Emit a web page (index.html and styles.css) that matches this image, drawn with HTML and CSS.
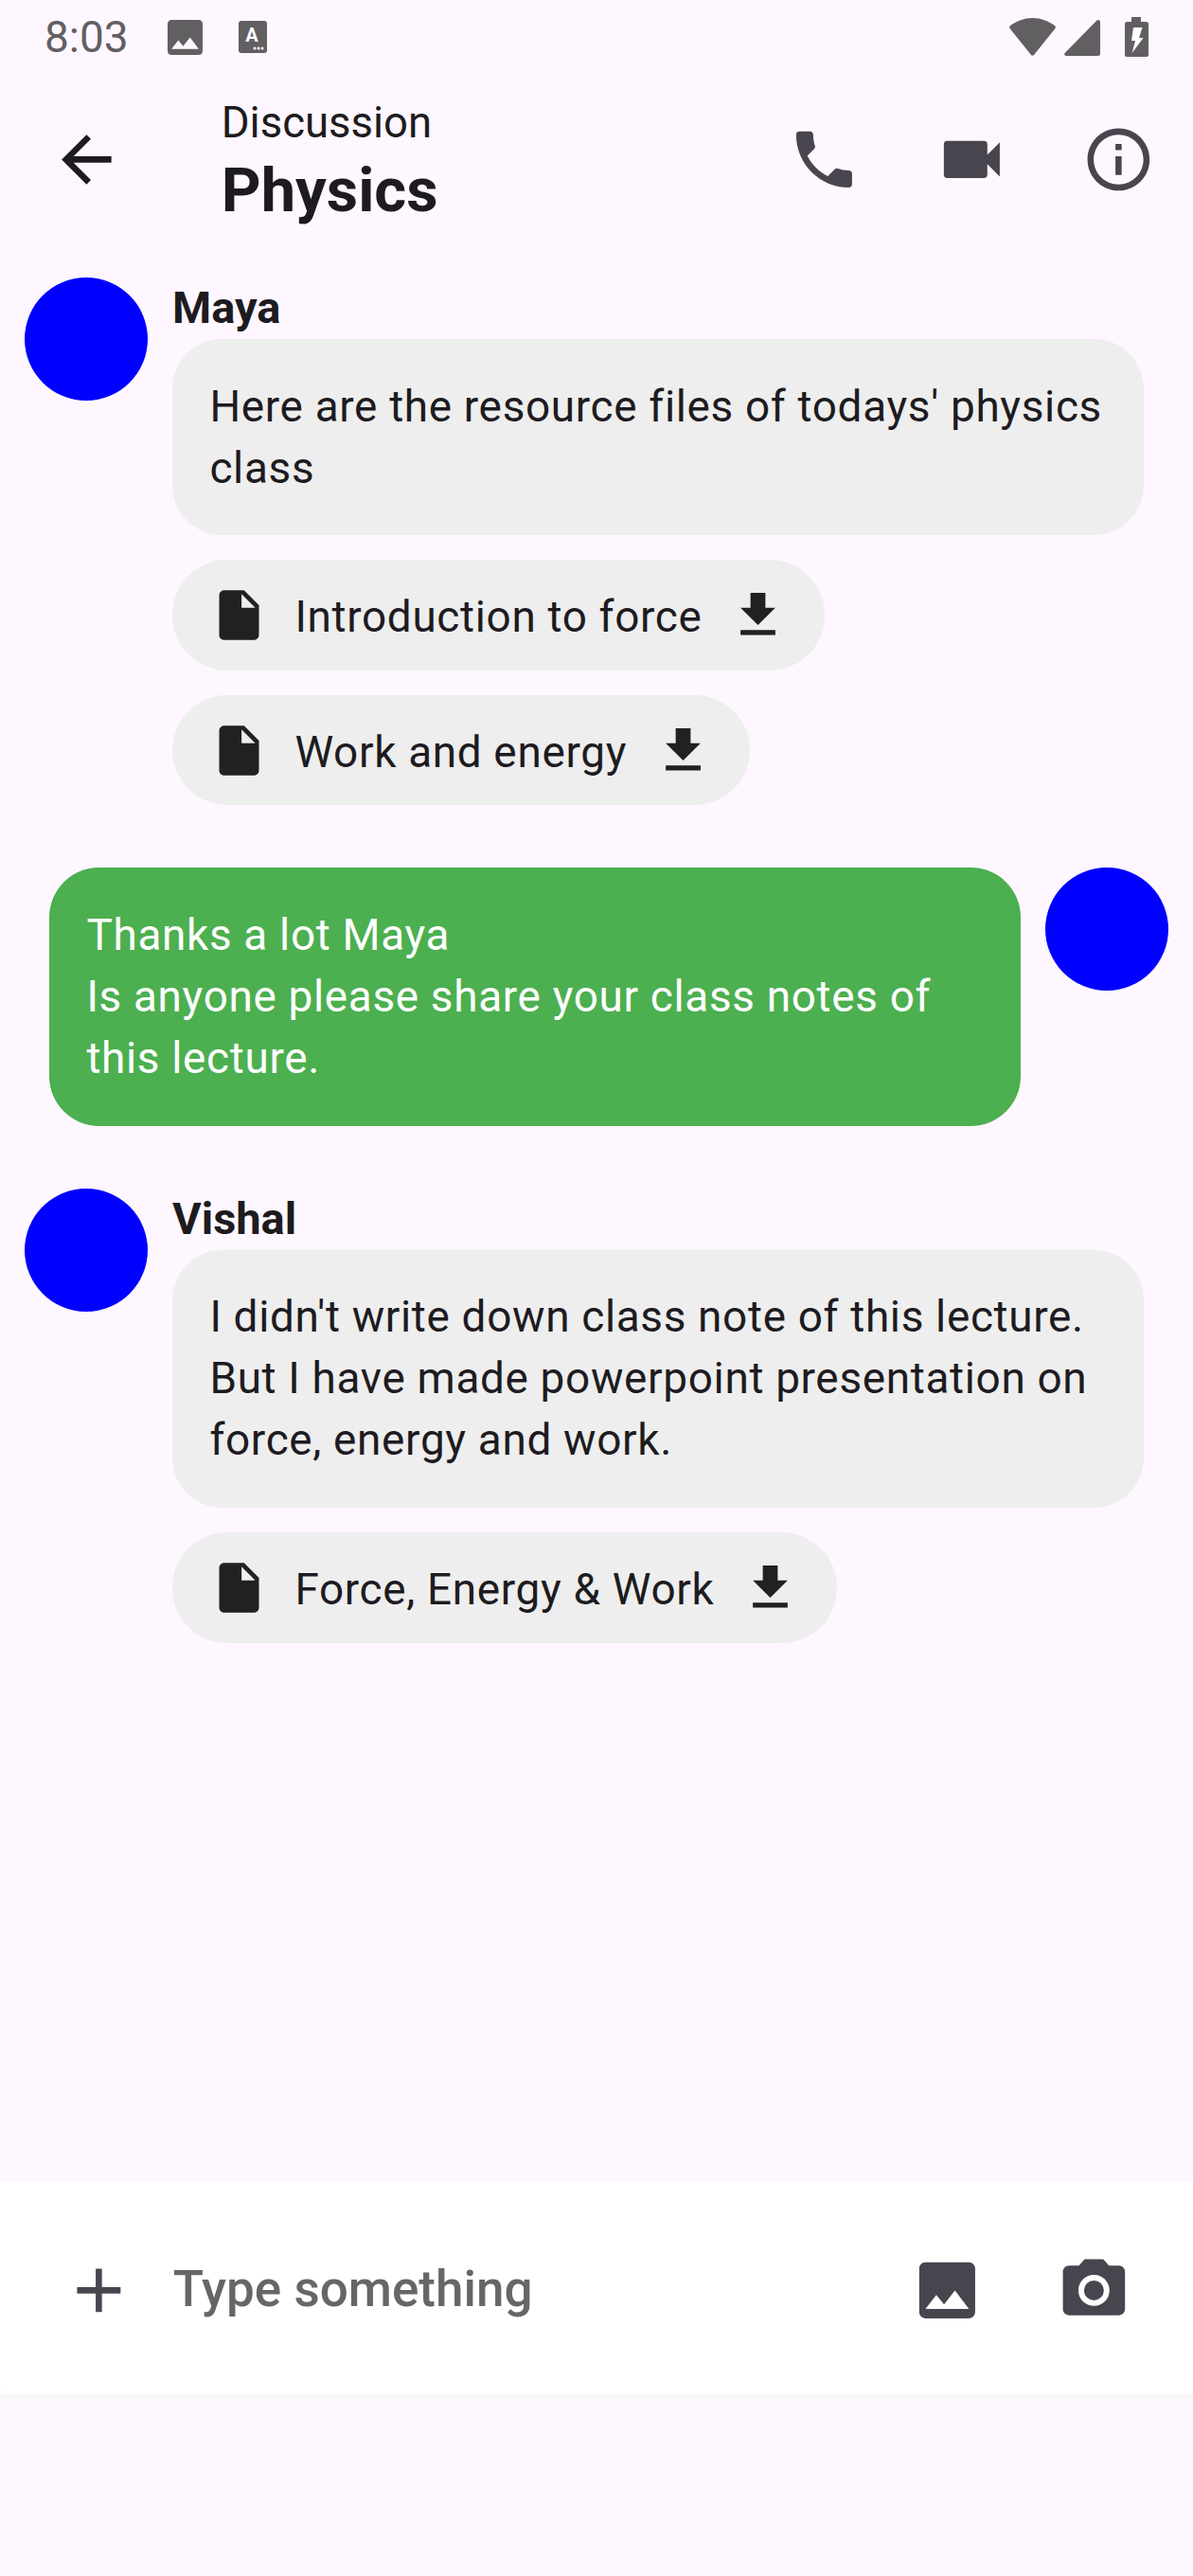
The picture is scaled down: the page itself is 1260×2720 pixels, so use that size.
FILE: index.html
```html
<!DOCTYPE html>
<html>
<head>
	<meta charset="utf-8">
	<meta name="viewport" content="width=device-width, initial-scale=1">
	<title>Physics discussion</title>
	<link rel="stylesheet" href="styles.css">
</head>
<body>
	<div class="page">
		<div class="statusbar">
			<span class="clock">8:03</span>
			<svg class="st-image" viewBox="3 3 18 18"><path d="M21 19V5c0-1.1-.9-2-2-2H5c-1.1 0-2 .9-2 2v14c0 1.1.9 2 2 2h14c1.1 0 2-.9 2-2zM8.5 13.5l2.5 3.01L14.5 12l4.5 6H5l3.5-4.5z"/></svg>
			<svg class="st-font" viewBox="0 0 30 34">
				<rect width="30" height="34" rx="3"/>
				<text x="14" y="22" class="st-font-a">A</text>
				<circle cx="17" cy="29" r="1.5" class="st-white"/>
				<circle cx="21" cy="29" r="1.5" class="st-white"/>
				<circle cx="25" cy="29" r="1.5" class="st-white"/>
			</svg>
			<span class="spacer"></span>
			<svg class="st-wifi" viewBox="0 0 49 40"><path d="M1 8C8 3 16 0 24.5 0S41 3 48 8c1 1 1 2 .5 3L26 39c-.8 1-2.2 1-3 0L.5 11C0 10 0 9 1 8z"/></svg>
			<svg class="st-signal" viewBox="0 0 38 38"><path d="M36 0c1 0 2 1 2 2v34c0 1-1 2-2 2H2c-1.6 0-2.4-2-1.4-3L34.5.6z"/></svg>
			<svg class="st-battery" viewBox="0 0 25 42">
				<path d="M7 0h10v5h6c1 0 2 1 2 2v33c0 1-1 2-2 2H2c-1 0-2-1-2-2V7c0-1 1-2 2-2h5z"/>
				<polygon class="st-white" points="9,11 18.500,11 15,22 19.500,22 7.600,38 11,25 7,25"/>
			</svg>
		</div>

		<div class="topbar">
			<svg class="icon icon-dark" viewBox="0 0 24 24"><path d="M20 11H7.830l5.590-5.590L12 4l-8 8 8 8 1.410-1.410L7.830 13H20v-2z"/></svg>
			<div class="title-box">
				<div class="title-small">Discussion</div>
				<div class="title-big">Physics</div>
			</div>
			<svg class="icon" viewBox="0 0 24 24"><path d="M6.620 10.790c1.440 2.830 3.760 5.140 6.590 6.590l2.200-2.200c.27-.27.67-.36 1.020-.24 1.120.37 2.330.57 3.570.57.55 0 1 .45 1 1V20c0 .55-.45 1-1 1-9.390 0-17-7.610-17-17 0-.55.45-1 1-1h3.500c.55 0 1 .45 1 1 0 1.250.2 2.450.57 3.570.11.35.03.74-.25 1.020l-2.200 2.200z"/></svg>
			<svg class="icon" viewBox="0 0 24 24"><path d="M17 10.500V7c0-.55-.45-1-1-1H4c-.55 0-1 .45-1 1v10c0 .55.45 1 1 1h12c.55 0 1-.45 1-1v-3.500l4 4v-11l-4 4z"/></svg>
			<svg class="icon" viewBox="0 0 24 24"><path d="M11 7h2v2h-2zm0 4h2v6h-2zm1-9C6.480 2 2 6.480 2 12s4.480 10 10 10 10-4.480 10-10S17.520 2 12 2zm0 18c-4.410 0-8-3.590-8-8s3.590-8 8-8 8 3.590 8 8-3.590 8-8 8z"/></svg>
		</div>

		<div class="chat">
			<div class="msg">
				<div class="avatar"></div>
				<div class="msg-body">
					<div class="name">Maya</div>
					<div class="bubble">Here are the resource files of todays' physics class</div>
					<div class="file">
						<svg class="file-icon" viewBox="0 0 24 24"><path d="M6 2c-1.100 0-1.990.9-1.990 2L4 20c0 1.100.89 2 1.990 2H18c1.100 0 2-.9 2-2V8l-6-6H6zm7 7V3.500L18.500 9H13z"/></svg>
						<span>Introduction to force</span>
						<svg class="file-icon" viewBox="0 0 24 24"><path d="M19 9h-4V3H9v6H5l7 7 7-7zM5 18v2h14v-2H5z"/></svg>
					</div>
					<div class="file">
						<svg class="file-icon" viewBox="0 0 24 24"><path d="M6 2c-1.100 0-1.990.9-1.990 2L4 20c0 1.100.89 2 1.990 2H18c1.100 0 2-.9 2-2V8l-6-6H6zm7 7V3.500L18.500 9H13z"/></svg>
						<span>Work and energy</span>
						<svg class="file-icon" viewBox="0 0 24 24"><path d="M19 9h-4V3H9v6H5l7 7 7-7zM5 18v2h14v-2H5z"/></svg>
					</div>
				</div>
			</div>

			<div class="msg msg-mine">
				<div class="bubble bubble-green">Thanks a lot Maya<br>Is anyone please share your class notes of this lecture.</div>
				<div class="avatar"></div>
			</div>

			<div class="msg">
				<div class="avatar"></div>
				<div class="msg-body">
					<div class="name">Vishal</div>
					<div class="bubble">I didn't write down class note of this lecture. But I have made powerpoint presentation on force, energy and work.</div>
					<div class="file">
						<svg class="file-icon" viewBox="0 0 24 24"><path d="M6 2c-1.100 0-1.990.9-1.990 2L4 20c0 1.100.89 2 1.990 2H18c1.100 0 2-.9 2-2V8l-6-6H6zm7 7V3.500L18.500 9H13z"/></svg>
						<span>Force, Energy &amp; Work</span>
						<svg class="file-icon" viewBox="0 0 24 24"><path d="M19 9h-4V3H9v6H5l7 7 7-7zM5 18v2h14v-2H5z"/></svg>
					</div>
				</div>
			</div>
		</div>

		<div class="inputbar">
			<svg class="icon" viewBox="0 0 24 24"><path d="M19 13h-6v6h-2v-6H5v-2h6V5h2v6h6v2z"/></svg>
			<span class="placeholder">Type something</span>
			<svg class="icon" viewBox="0 0 24 24"><path d="M21 19V5c0-1.100-.9-2-2-2H5c-1.100 0-2 .9-2 2v14c0 1.100.9 2 2 2h14c1.100 0 2-.9 2-2zM8.500 13.500l2.500 3.010L14.500 12l4.500 6H5l3.500-4.500z"/></svg>
			<svg class="icon" viewBox="0 0 24 24"><circle cx="12" cy="12" r="3.200"/><path d="M9 2L7.170 4H4c-1.100 0-2 .9-2 2v12c0 1.100.9 2 2 2h16c1.100 0 2-.9 2-2V6c0-1.100-.9-2-2-2h-3.170L15 2H9zm3 15c-2.760 0-5-2.240-5-5s2.240-5 5-5 5 2.240 5 5-2.240 5-5 5z"/></svg>
		</div>
	</div>
</body>
</html>
```

FILE: styles.css
```css
html, body {
	margin: 0;
	padding: 0;
}
body {
	background-color: #fef7ff;
	color: #1d1b20;
	font-family: Roboto, "Liberation Sans", sans-serif;
}
.page {
	width: 1260px;
	height: 2720px;
	display: flex;
	flex-direction: column;
}

/* status bar */
.statusbar {
	height: 78px;
	display: flex;
	align-items: center;
	padding: 0 47px;
	fill: #625f62;
}
.clock {
	font-size: 46px;
	color: #625f62;
}
.spacer {
	flex: 1;
}
.st-image {
	width: 37px;
	height: 37px;
	margin-left: 41px;
}
.st-font {
	width: 30px;
	height: 34px;
	margin-left: 38px;
}
.st-font-a {
	font-size: 20px;
	font-weight: 700;
	fill: #fff;
	text-anchor: middle;
}
.st-white {
	fill: #fff;
}
.st-wifi {
	width: 49px;
	height: 40px;
}
.st-signal {
	width: 38px;
	height: 38px;
	margin-left: 9px;
	margin-top: 2px;
}
.st-battery {
	width: 25px;
	height: 42px;
	margin-left: 26px;
}

/* top bar */
.topbar {
	height: 180px;
	display: flex;
	align-items: center;
	padding-left: 52px;
	padding-right: 39px;
	gap: 77px;
}
.icon {
	width: 78.75px;
	height: 78.75px;
	flex: none;
	fill: #49454f;
}
.icon-dark {
	fill: #1d1b20;
}
.title-box {
	flex: 1;
	margin-left: 26px;
}
.title-small {
	font-size: 45.5px;
	line-height: 65px;
}
.title-big {
	font-size: 65px;
	line-height: 78px;
	font-weight: 700;
}

/* messages */
.chat {
	flex: 1;
	padding-top: 35px;
	display: flex;
	flex-direction: column;
	gap: 66px;
}
.msg {
	display: flex;
	align-items: flex-start;
	gap: 26px;
	padding: 0 26px;
}
.msg-mine {
	justify-content: flex-end;
}
.avatar {
	width: 130px;
	height: 130px;
	flex: none;
	border-radius: 50%;
	background-color: #0000ff;
}
.msg-body {
	display: flex;
	flex-direction: column;
	align-items: flex-start;
	gap: 26px;
}
.name {
	font-size: 47px;
	font-weight: 700;
	line-height: 64.75px;
	margin-bottom: -26px;
}
.bubble {
	width: 1026px;
	box-sizing: border-box;
	padding: 38.75px 39.4px;
	border-radius: 52.5px;
	background-color: #eeeeee;
	font-size: 45.9px;
	line-height: 65px;
	letter-spacing: 0.67px;
}
.bubble-green {
	background-color: #4caf50;
	color: #fff;
}
.file {
	display: flex;
	align-items: center;
	gap: 26px;
	padding: 25.75px 39.4px;
	border-radius: 58px;
	background-color: #eeeeee;
	font-size: 45.9px;
	line-height: 65px;
	letter-spacing: 0.67px;
}
.file span {
	margin: 2px 1.5px -2px 1px;
}
.file-icon {
	width: 63px;
	height: 63px;
	flex: none;
	fill: #212121;
}

/* input */
.inputbar {
	height: 228px;
	margin-bottom: 188px;
	display: flex;
	align-items: center;
	gap: 77px;
	padding: 0 65px;
	background-color: #fff;
	box-shadow: inset 0 -7px 6px -5px rgba(0, 0, 0, 0.05);
}
.placeholder {
	flex: 1;
	margin-left: -38px;
	padding-bottom: 3px;
	font-size: 53px;
	font-weight: 500;
	color: #666666;
}
```
